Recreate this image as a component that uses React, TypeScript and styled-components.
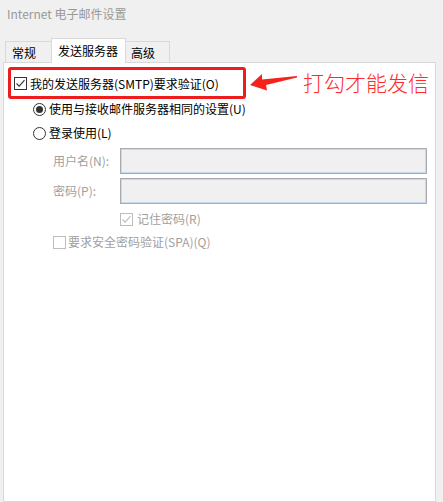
import React from "react";
import styled, { createGlobalStyle } from "styled-components";

const GlobalStyle = createGlobalStyle`
  html, body {
    margin: 0;
    padding: 0;
    background: #f0f0f0;
  }
  body {
    font-family: "Noto Sans CJK SC", "Noto Sans", "Liberation Sans", sans-serif;
    font-size: 12px;
    color: #000;
  }
  * { box-sizing: border-box; }
`;

const Window = styled.div`
  width: 443px;
  height: 502px;
  overflow: hidden;
  display: flex;
  flex-direction: column;
  background: #f0f0f0;
`;

const TitleBar = styled.div`
  height: 28px;
  padding-left: 7px;
  display: flex;
  align-items: center;
  color: #999;
  font-size: 12px;
  line-height: 1;
`;

const TabStrip = styled.div`
  height: 34px;
  display: flex;
  align-items: flex-end;
  padding-left: 5px;
`;

const Tab = styled.div<{ $active?: boolean; $w: number; $pl: number; $edge?: "left" | "right" }>`
  width: ${(p) => p.$w}px;
  padding-left: ${(p) => p.$pl}px;
  height: ${(p) => (p.$active ? 25 : 21)}px;
  margin-bottom: ${(p) => (p.$active ? -1 : 0)}px;
  position: ${(p) => (p.$active ? "relative" : "static")};
  z-index: ${(p) => (p.$active ? 1 : 0)};
  background: ${(p) => (p.$active ? "#fff" : "#f0f0f0")};
  border: 1px solid #d9d9d9;
  border-bottom: none;
  ${(p) => (p.$edge === "left" ? "border-right: none;" : "")}
  ${(p) => (p.$edge === "right" ? "border-left: none;" : "")}
  display: flex;
  align-items: ${(p) => (p.$active ? "flex-start" : "center")};
  padding-top: ${(p) => (p.$active ? 4 : 1)}px;
  line-height: 16px;
  color: #000;
`;

const Panel = styled.div`
  flex: 1;
  margin-left: 3px;
  width: 433px;
  background: #fff;
  border: 1px solid #d9d9d9;
  padding: 4px 0 0 4px;
  display: flex;
  flex-direction: column;
`;

const AuthRow = styled.div`
  display: flex;
  align-items: center;
  height: 32px;
`;

const RedBox = styled.div`
  width: 238px;
  height: 32px;
  border: 3px solid #ee1c1c;
  border-radius: 3px;
  padding-left: 3px;
  display: flex;
  align-items: center;
  gap: 3px;
`;

const ArrowSvg = styled.svg`
  margin-left: 4px;
  flex: none;
`;

const Annotation = styled.span`
  margin-left: 5px;
  font-size: 21px;
  font-weight: 300;
  color: #ff2a2a;
  line-height: 1;
  margin-top: -2px;
  letter-spacing: 0px;
`;

const OptionRow = styled.div<{ $indent: number; $top?: number; $gap?: number; $disabled?: boolean }>`
  display: flex;
  align-items: center;
  height: 20px;
  padding-left: ${(p) => p.$indent}px;
  margin-top: ${(p) => p.$top ?? 0}px;
  gap: ${(p) => p.$gap ?? 3}px;
  color: ${(p) => (p.$disabled ? "#a0a0a0" : "#000")};
  line-height: 16px;
  white-space: nowrap;
`;

const FieldRow = styled.div<{ $top: number }>`
  display: flex;
  align-items: center;
  padding-left: 45px;
  margin-top: ${(p) => p.$top}px;
`;

const FieldLabel = styled.span`
  width: 67px;
  color: #a0a0a0;
  line-height: 16px;
`;

const TextBox = styled.div`
  width: 307px;
  height: 26px;
  background: #f0f0f0;
  border: 1px solid #a9aab2;
  box-shadow: inset 0 0 0 1px #c6d9ee;
`;

const Label = styled.span``;

function Checkbox({ checked, disabled }: { checked?: boolean; disabled?: boolean }) {
  const c = disabled ? "#bdbdbd" : "#333";
  return (
    <svg width="13" height="13" viewBox="0 0 13 13" style={{ flex: "none" }}>
      <rect x="0.5" y="0.5" width="12" height="12" fill="#fff" stroke={c} />
      {checked && (
        <path d="M2.5 6.5 L5.2 9.2 L10.5 3.2" fill="none" stroke={c} strokeWidth="1.1" />
      )}
    </svg>
  );
}

function Radio({ checked }: { checked?: boolean }) {
  return (
    <svg width="13" height="13" viewBox="0 0 13 13" style={{ flex: "none" }}>
      <circle cx="6.5" cy="6.5" r="6" fill="#fff" stroke="#333" />
      {checked && <circle cx="6.5" cy="6.5" r="3.5" fill="#333" />}
    </svg>
  );
}

export default function App() {
  return (
    <>
      <GlobalStyle />
      <Window>
        <TitleBar>Internet 电子邮件设置</TitleBar>
        <TabStrip>
          <Tab $w={46} $pl={6} $edge="left">常规</Tab>
          <Tab $active $w={75} $pl={6}>发送服务器</Tab>
          <Tab $w={44} $pl={5} $edge="right">高级</Tab>
        </TabStrip>
        <Panel>
          <AuthRow>
            <RedBox>
              <Checkbox checked />
              <Label>我的发送服务器(SMTP)要求验证(O)</Label>
            </RedBox>
            <ArrowSvg width="48" height="20" viewBox="0 0 48 20">
              <polygon points="0,12 12,1 12,6.5 47,3 47,4.5 16,12 17,17.5" fill="#f4241c" />
            </ArrowSvg>
            <Annotation>打勾才能发信</Annotation>
          </AuthRow>
          <OptionRow $indent={25}>
            <Radio checked />
            <Label>使用与接收邮件服务器相同的设置(U)</Label>
          </OptionRow>
          <OptionRow $indent={25} $top={4}>
            <Radio />
            <Label>登录使用(L)</Label>
          </OptionRow>
          <FieldRow $top={5}>
            <FieldLabel>用户名(N):</FieldLabel>
            <TextBox />
          </FieldRow>
          <FieldRow $top={4}>
            <FieldLabel>密码(P):</FieldLabel>
            <TextBox />
          </FieldRow>
          <OptionRow $indent={112} $top={5} $gap={4} $disabled>
            <Checkbox checked disabled />
            <Label>记住密码(R)</Label>
          </OptionRow>
          <OptionRow $indent={45} $top={3} $gap={2} $disabled>
            <Checkbox disabled />
            <Label>要求安全密码验证(SPA)(Q)</Label>
          </OptionRow>
        </Panel>
      </Window>
    </>
  );
}
